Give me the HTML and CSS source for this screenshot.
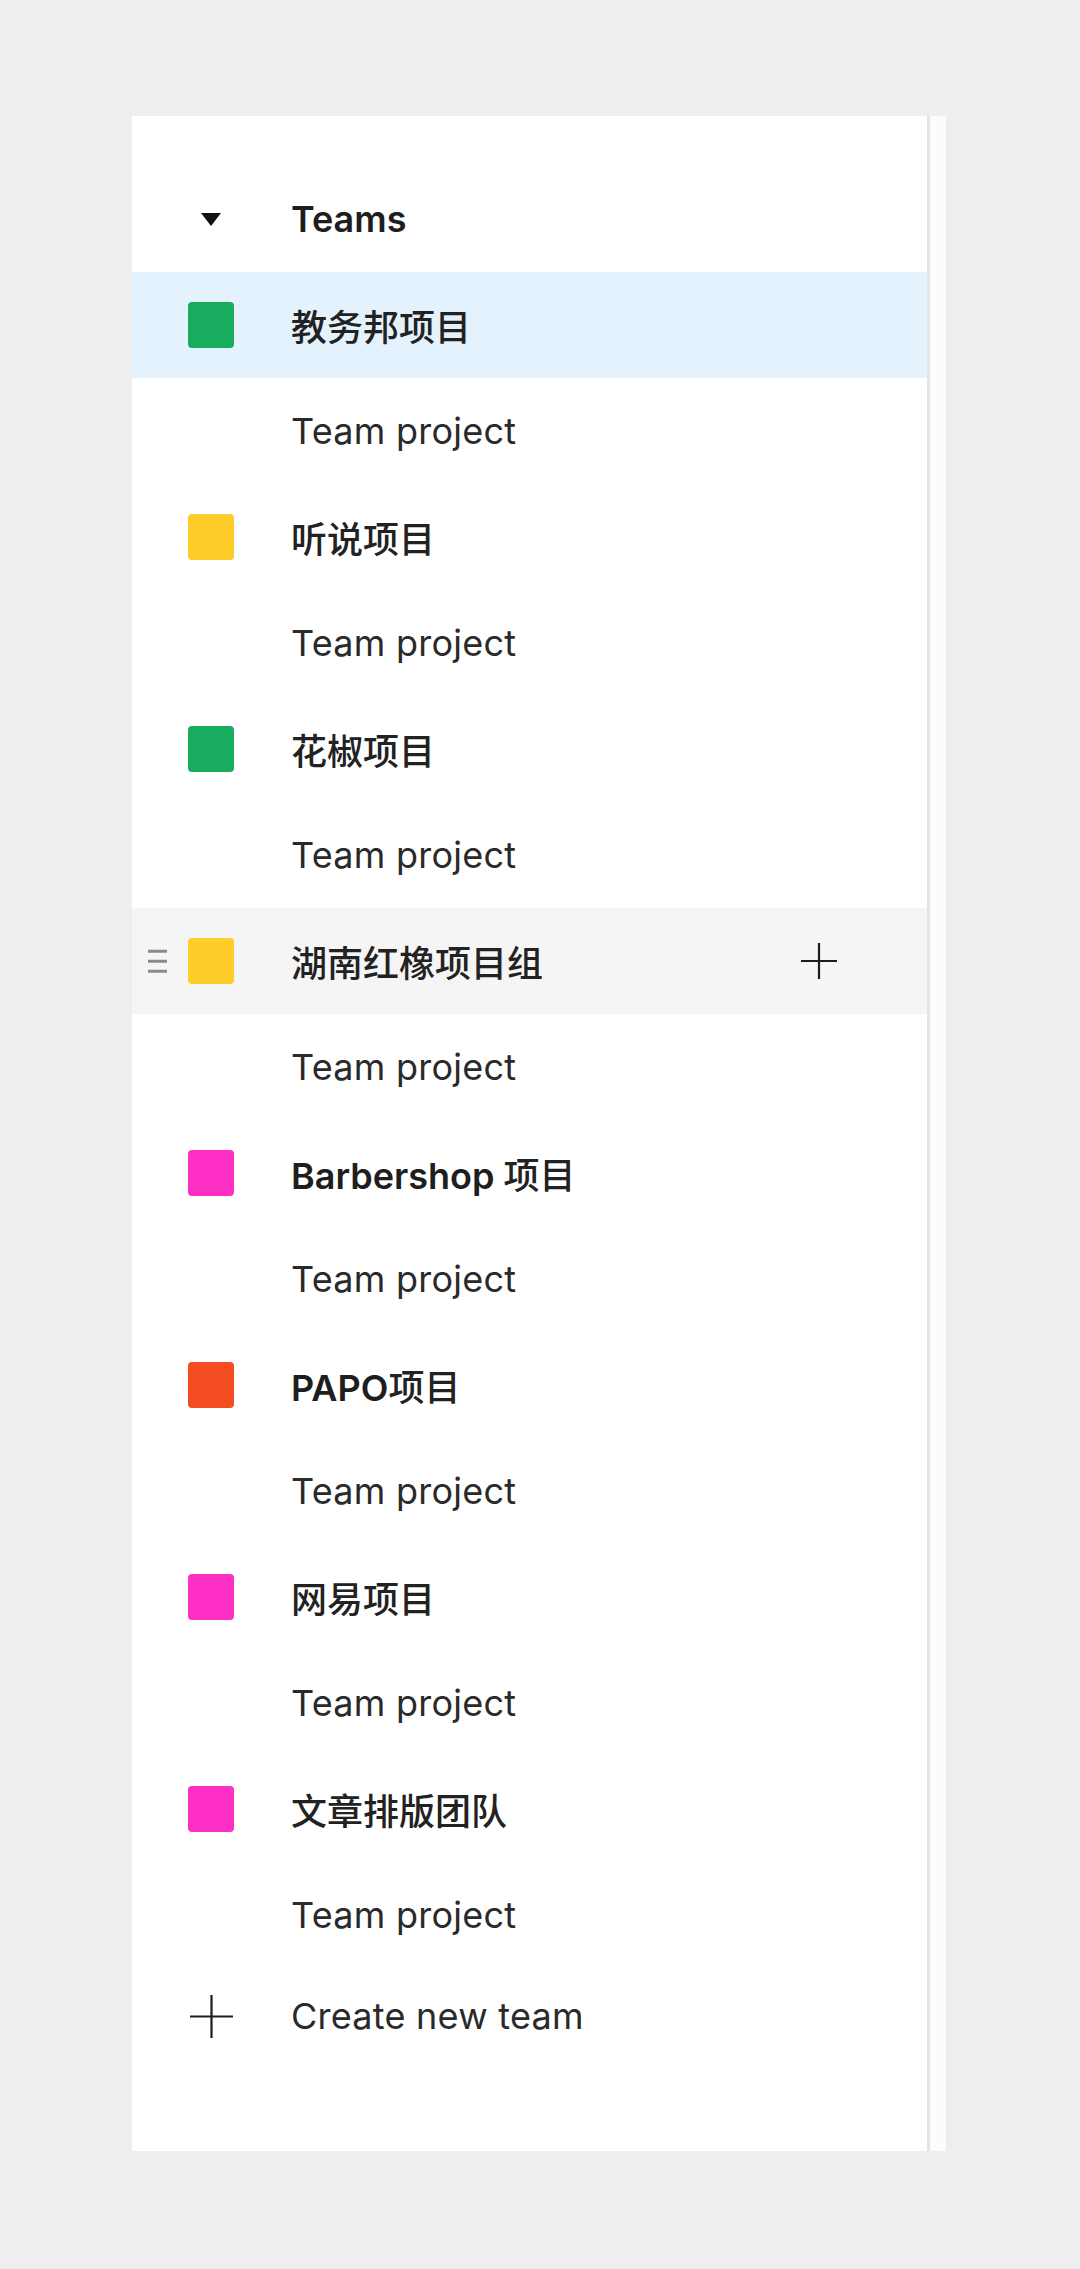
FILE: index.html
```html
<!DOCTYPE html>
<html lang="zh-CN">
<head>
<meta charset="utf-8">
<title>Teams</title>
<link rel="stylesheet" href="styles.css">
</head>
<body>
<div class="page">
  <div class="panel">
    <nav class="sidebar">
      <div class="row header">
        <span class="slot"><span class="caret"></span></span>
        <span class="label bold">Teams</span>
      </div>

      <div class="row team selected">
        <span class="slot"><span class="swatch green"></span></span>
        <span class="label bold"><span class="cjk">教务邦项目</span></span>
      </div>
      <div class="row sub"><span class="slot"></span><span class="label">Team project</span></div>

      <div class="row team">
        <span class="slot"><span class="swatch yellow"></span></span>
        <span class="label bold"><span class="cjk">听说项目</span></span>
      </div>
      <div class="row sub"><span class="slot"></span><span class="label">Team project</span></div>

      <div class="row team">
        <span class="slot"><span class="swatch green"></span></span>
        <span class="label bold"><span class="cjk">花椒项目</span></span>
      </div>
      <div class="row sub"><span class="slot"></span><span class="label">Team project</span></div>

      <div class="row team hover">
        <span class="handle"><i></i><i></i><i></i></span>
        <span class="slot"><span class="swatch yellow"></span></span>
        <span class="label bold"><span class="cjk">湖南红橡项目组</span></span>
        <span class="add">
          <svg viewBox="0 0 36 36" width="36" height="36"><path d="M18 0V36M0 18H36" stroke="#1c1c1c" stroke-width="2.2" fill="none"/></svg>
        </span>
      </div>
      <div class="row sub"><span class="slot"></span><span class="label">Team project</span></div>

      <div class="row team">
        <span class="slot"><span class="swatch pink"></span></span>
        <span class="label bold">Barbershop <span class="cjk">项目</span></span>
      </div>
      <div class="row sub"><span class="slot"></span><span class="label">Team project</span></div>

      <div class="row team">
        <span class="slot"><span class="swatch orange"></span></span>
        <span class="label bold">PAPO<span class="cjk">项目</span></span>
      </div>
      <div class="row sub"><span class="slot"></span><span class="label">Team project</span></div>

      <div class="row team">
        <span class="slot"><span class="swatch pink"></span></span>
        <span class="label bold"><span class="cjk">网易项目</span></span>
      </div>
      <div class="row sub"><span class="slot"></span><span class="label">Team project</span></div>

      <div class="row team">
        <span class="slot"><span class="swatch pink"></span></span>
        <span class="label bold"><span class="cjk">文章排版团队</span></span>
      </div>
      <div class="row sub"><span class="slot"></span><span class="label">Team project</span></div>

      <div class="row create">
        <span class="slot">
          <svg viewBox="0 0 43 43" width="43" height="43"><path d="M21.5 0V43M0 21.5H43" stroke="#1c1c1c" stroke-width="2.2" fill="none"/></svg>
        </span>
        <span class="label">Create new team</span>
      </div>
    </nav>
    <div class="strip"></div>
  </div>
</div>
</body>
</html>
```
FILE: styles.css
```css
html, body {
  margin: 0;
  padding: 0;
  background: #eeeeee;
}

.page {
  padding: 116px 0 0 132px;
  font-family: Inter, "Noto Sans CJK SC", sans-serif;
}

.panel {
  display: flex;
  width: 814px;
  height: 2035px;
}

.sidebar {
  width: 795px;
  background: #ffffff;
  border-right: 3px solid #e4e4e4;
  padding-top: 50px;
  box-sizing: content-box;
}

.strip {
  width: 16px;
  background: #fcfcfc;
}

.row {
  position: relative;
  display: flex;
  align-items: center;
  height: 106px;
}

.row.create {
  height: 96px;
}

.row.selected {
  background: #e4f2fd;
}

.row.hover {
  background: #f5f5f5;
}

.slot {
  width: 46px;
  margin-left: 56px;
  margin-right: 57px;
  display: flex;
  align-items: center;
  justify-content: center;
  flex: none;
}

.label {
  font-size: 36px;
  color: #2a2a2a;
  letter-spacing: 0.25px;
  white-space: nowrap;
}

.label.bold {
  font-weight: 600;
  color: #1e1e1e;
  letter-spacing: 0;
}

.label .cjk {
  font-family: "Noto Sans CJK SC", sans-serif;
  font-weight: 500;
  color: #222222;
}

.caret {
  width: 0;
  height: 0;
  border-left: 10.5px solid transparent;
  border-right: 10.5px solid transparent;
  border-top: 13px solid #111111;
  margin-top: 1px;
}

.swatch {
  width: 46px;
  height: 46px;
  border-radius: 4px;
}

.swatch.green { background: #18ad5e; }
.swatch.yellow { background: #ffcd29; }
.swatch.pink { background: #fd2fc5; }
.swatch.orange { background: #f44d22; }

.handle {
  position: absolute;
  left: 16px;
  top: 50%;
  transform: translateY(-50%);
  display: flex;
  flex-direction: column;
  gap: 7.5px;
  width: 19px;
}

.handle i {
  display: block;
  height: 2.5px;
  background: #8a8a8a;
}

.add {
  margin-left: auto;
  margin-right: 90px;
  display: flex;
}

.create .slot svg {
  display: block;
}
```
